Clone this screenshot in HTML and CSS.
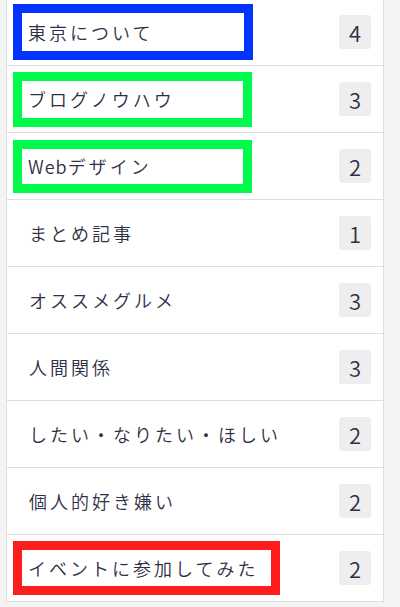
FILE: index.html
```html
<!DOCTYPE html>
<html lang="ja">
<head>
    <meta charset="UTF-8">
    <meta name="viewport" content="width=device-width, initial-scale=1.0">
    <title>カテゴリー</title>
    <link rel="stylesheet" href="styles.css">
</head>
<body>
    <ul class="category-list">
        <li class="category">
            <span class="name mark mark-blue">東京について</span>
            <span class="count">4</span>
        </li>
        <li class="category">
            <span class="name mark mark-green">ブログノウハウ</span>
            <span class="count">3</span>
        </li>
        <li class="category">
            <span class="name mark mark-green mark-short"><span class="latin">Web</span>デザイン</span>
            <span class="count">2</span>
        </li>
        <li class="category">
            <span class="name">まとめ記事</span>
            <span class="count">1</span>
        </li>
        <li class="category">
            <span class="name">オススメグルメ</span>
            <span class="count">3</span>
        </li>
        <li class="category">
            <span class="name">人間関係</span>
            <span class="count">3</span>
        </li>
        <li class="category">
            <span class="name">したい・なりたい・ほしい</span>
            <span class="count">2</span>
        </li>
        <li class="category">
            <span class="name">個人的好き嫌い</span>
            <span class="count">2</span>
        </li>
        <li class="category">
            <span class="name mark mark-red">イベントに参加してみた</span>
            <span class="count">2</span>
        </li>
    </ul>
</body>
</html>
```

FILE: styles.css
```css
body {
    margin: 0;
    background: #f3f3f3;
    font-family: "Noto Sans CJK JP", "Noto Sans", sans-serif;
    font-weight: 350;
    color: #2f2f45;
}
.category-list {
    list-style: none;
    margin: -1px 16px 0 6px;
    padding: 0;
    background: #fff;
    border-left: 1px solid #dedede;
    border-right: 1px solid #dedede;
}
.category {
    display: flex;
    align-items: center;
    justify-content: space-between;
    height: 66px;
    padding: 0 12px 0 22px;
    border-bottom: 1px solid #dedede;
}
.name {
    font-size: 18px;
    letter-spacing: 3px;
    line-height: 1;
    white-space: nowrap;
}
.latin {
    letter-spacing: 1px;
}
.count {
    display: flex;
    align-items: center;
    justify-content: center;
    width: 32px;
    height: 34px;
    border-radius: 3px;
    background: #eeeeee;
    font-size: 22px;
    line-height: 1;
}
.mark {
    display: flex;
    align-items: center;
    box-sizing: border-box;
    height: 56px;
    margin-left: -16px;
    padding-left: 6px;
    border: 9px solid;
}
.mark-blue {
    width: 240px;
    border-color: #0433ff;
}
.mark-green {
    width: 239px;
    height: 55px;
    border-color: #00fa4c;
}
.mark-short {
    height: 53px;
}
.mark-red {
    width: 267px;
    height: 54px;
    border-color: #ff1c1c;
}
```
